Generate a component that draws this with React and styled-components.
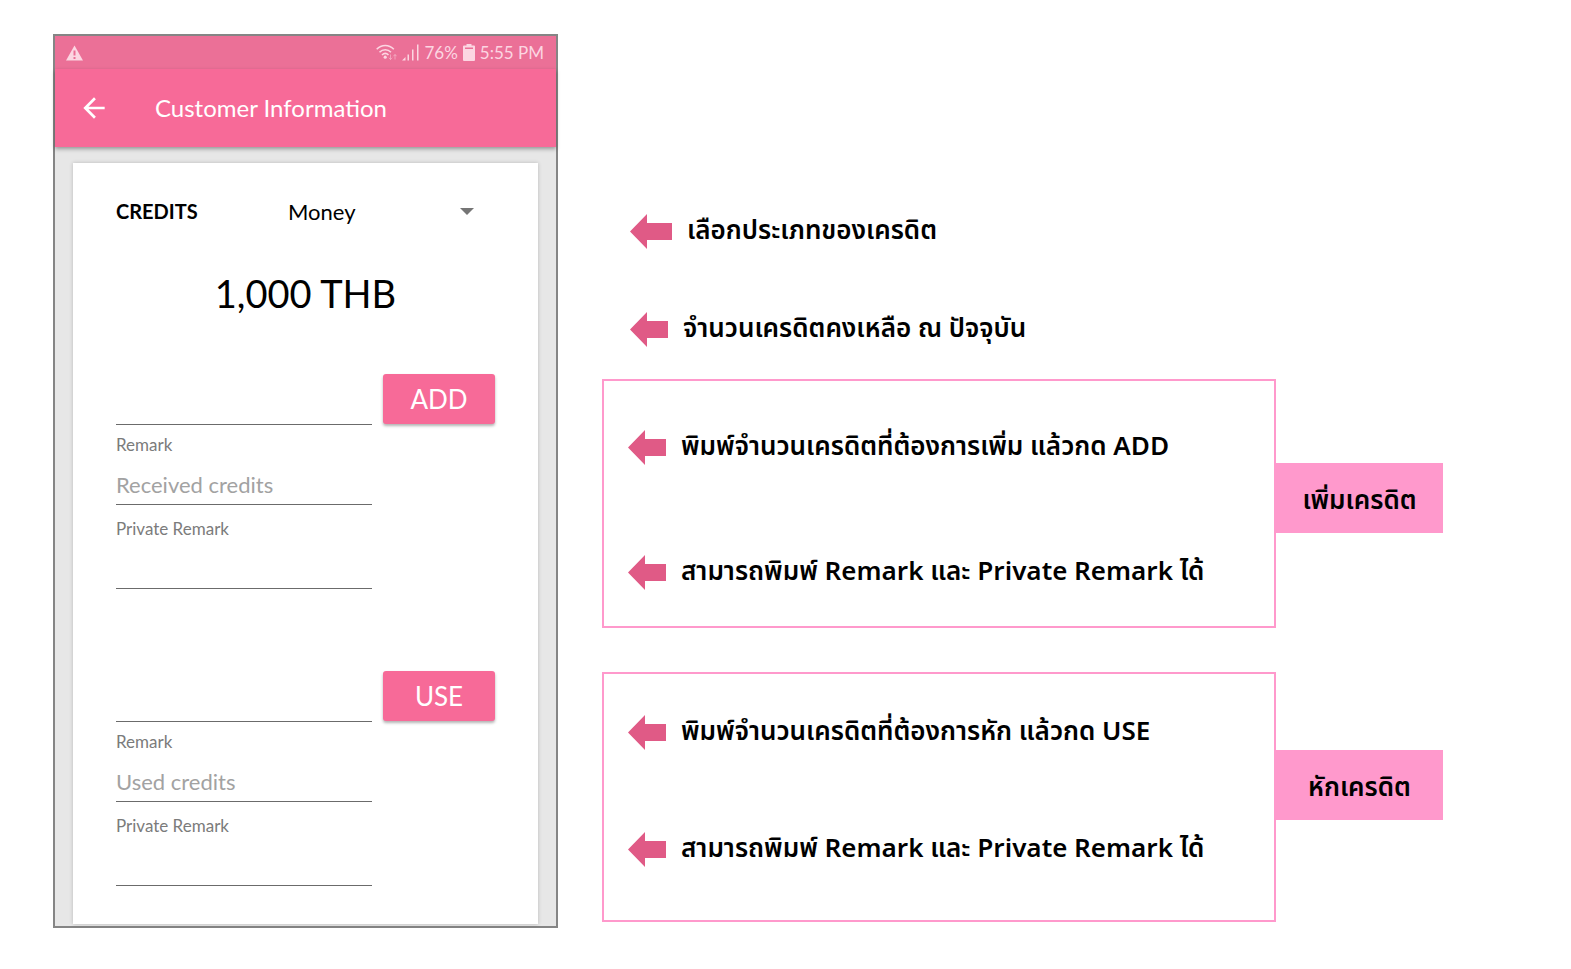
import { useState } from "react";
import styled, { createGlobalStyle } from "styled-components";
import { MdArrowBack } from "react-icons/md";

const GlobalStyle = createGlobalStyle`
  * {
    box-sizing: border-box;
  }

  body {
    margin: 0;
    background: #fff;
    color: #000;
    font-family: Lato, "Noto Sans", sans-serif;
  }
`;

const Page = styled.main`
  display: grid;
  grid-template-columns: minmax(0, 505fr) minmax(0, 841fr);
  column-gap: 44px;
  align-items: start;
  padding: 34px 128px 42px 53px;
`;

const Phone = styled.section`
  border: 2px solid #858585;
  background: #e7e7e7;
`;

const StatusBar = styled.div`
  display: flex;
  align-items: center;
  height: 33px;
  padding: 0 12px 0 11px;
  background: #eb7097;
  color: #fcd6e2;
  font-size: 17px;
  line-height: 24px;
`;

const StatusRight = styled.div`
  display: flex;
  align-items: center;
  gap: 5px;
  margin-left: auto;
`;

const AppBar = styled.header`
  display: flex;
  align-items: center;
  gap: 45px;
  height: 78px;
  padding: 0 23px;
  background: #f76a98;
  color: #fff;
  box-shadow: 0 2px 4px rgba(0, 0, 0, 0.35);

  h1 {
    margin: 0;
    font-size: 24px;
    font-weight: 400;
    line-height: 32px;
  }
`;

const BackButton = styled.button`
  display: flex;
  padding: 0;
  border: 0;
  background: none;
  color: inherit;
  cursor: pointer;
`;

const Card = styled.div`
  margin: 16px 18px 2px;
  padding: 28px 43px 38px;
  background: #fff;
  box-shadow: 0 0 4px rgba(0, 0, 0, 0.2);
`;

const CreditsRow = styled.div`
  display: flex;
  align-items: center;
  height: 40px;

  label {
    flex: 0 0 172px;
    font-size: 20px;
    font-weight: 700;
    line-height: 32px;
  }
`;

const SelectWrap = styled.div`
  display: flex;
  flex: 1;
  align-items: center;
  padding-right: 21px;

  select {
    flex: 1;
    height: 40px;
    padding: 0;
    border: 0;
    background: none;
    color: #000;
    font: inherit;
    font-size: 22px;
    appearance: none;
  }

  svg {
    pointer-events: none;
  }
`;

const Balance = styled.p`
  margin: 32px 0 51px;
  font-size: 38px;
  line-height: 60px;
  text-align: center;
`;

const CreditForm = styled.form`
  & + & {
    margin-top: 82px;
  }
`;

const AmountRow = styled.div`
  display: flex;
  align-items: flex-start;
  gap: 11px;
`;

const Input = styled.input`
  display: block;
  width: 100%;
  min-width: 0;
  height: ${({ $height }) => $height}px;
  padding: 0;
  border: 0;
  border-bottom: 1px solid #6b6b6b;
  border-radius: 0;
  outline: 0;
  background: none;
  font: inherit;
  font-size: 22px;

  &::placeholder {
    color: #a2a2a2;
    opacity: 1;
  }
`;

const Button = styled.button`
  flex: 0 0 112px;
  height: 50px;
  padding: 0;
  border: 0;
  border-radius: 3px;
  background: #f76a98;
  color: #fff;
  font: inherit;
  font-size: 26px;
  box-shadow: 0 2px 3px rgba(0, 0, 0, 0.3);
  cursor: pointer;
`;

const Remark = styled.div`
  padding-right: 123px;

  label {
    display: block;
    color: #7b7b7b;
    font-size: 17px;
    line-height: ${({ $labelHeight }) => $labelHeight}px;
  }
`;

const Notes = styled.section`
  padding-top: 173px;
  font-family: "Noto Sans Thai", "Noto Sans", sans-serif;
  font-size: 26px;
  font-weight: 600;
`;

const Note = styled.p`
  display: flex;
  align-items: center;
  gap: 15px;
  height: 48px;
  margin: 0;
  padding-left: 28px;
  white-space: nowrap;

  & + & {
    margin-top: 50px;
  }
`;

const Group = styled.div`
  display: flex;
  align-items: flex-start;
  margin-top: ${({ $top }) => $top}px;
`;

const GroupBox = styled.div`
  flex: 1;
  padding: ${({ $tight }) => ($tight ? "34px 0 47px" : "42px 0 30px")};
  border: 2px solid #ff99cc;

  ${Note} {
    padding-left: 24px;
  }

  ${Note} + ${Note} {
    margin-top: ${({ $tight }) => ($tight ? 69 : 77)}px;
  }
`;

const Tag = styled.div`
  display: flex;
  flex: 0 0 167px;
  align-items: center;
  justify-content: center;
  height: 70px;
  margin-top: ${({ $top }) => $top}px;
  padding-top: 6px;
  background: #ff99cc;
`;

const LeftArrow = ({ width = 38 }) => (
  <svg width={width} height="35" viewBox={`0 0 ${width} 35`} fill="#e05a86">
    <path d={`M0 17.5 17 0v9h${width - 17}v17H17v9z`} />
  </svg>
);

const WarningIcon = () => (
  <svg width="17" height="16" viewBox="0 0 17 16">
    <path d="M8.500 0.500 17 15.500H0z" fill="#fcd6e2" />
    <path d="M7.500 5.500h2v5h-2zM7.500 12h2v2h-2z" fill="#eb7097" />
  </svg>
);

const WifiIcon = () => (
  <svg width="21" height="17" viewBox="0 0 21 17" fill="none" stroke="#fcd6e2">
    <path d="M.7 5.200C5.500.2 13 .2 17.800 5.200M3.500 8.200c3.300-3.300 8.200-3.300 11.500 0M6 11c2-2 4.500-2 6.500 0" strokeWidth="1.600" />
    <circle cx="9.200" cy="13.200" r="1.600" fill="#fcd6e2" stroke="none" />
    <path d="M14.500 10.500v5m-1.700-1.800 1.700 1.800 1.700-1.800M19 15.500v-5m-1.700 1.800L19 10.500l1.700 1.800" opacity=".5" />
  </svg>
);

const SignalIcon = () => (
  <svg width="17" height="17" viewBox="0 0 17 17" fill="#fcd6e2">
    <path d="M0 16.500 3.500 13v3.500zM5.500 10.500H7v6H5.500zM10 5.500h1.500v11H10zM15 .5h1.500v16H15z" />
  </svg>
);

const BatteryIcon = () => (
  <svg width="12" height="17" viewBox="0 0 12 17">
    <path d="M3.500 0h5v1.500H11q1 0 1 1V16q0 1-1 1H1q-1 0-1-1V2.500q0-1 1-1h2.500z" fill="#fcd6e2" />
    <path d="M2 3.500h8V5H2z" fill="#eb7097" />
  </svg>
);

const CreditSection = ({ id, action, placeholder }) => (
  <CreditForm onSubmit={(e) => e.preventDefault()}>
    <AmountRow>
      <Input $height={51} type="text" inputMode="numeric" aria-label={`${action} amount`} />
      <Button type="submit">{action}</Button>
    </AmountRow>
    <Remark $labelHeight={40}>
      <label htmlFor={`${id}-remark`}>Remark</label>
      <Input $height={40} id={`${id}-remark`} type="text" placeholder={placeholder} />
    </Remark>
    <Remark $labelHeight={48}>
      <label htmlFor={`${id}-private`}>Private Remark</label>
      <Input $height={36} id={`${id}-private`} type="text" />
    </Remark>
  </CreditForm>
);

const App = () => {
  const [creditType, setCreditType] = useState("Money");

  return (
    <>
      <GlobalStyle />
      <Page>
        <Phone>
          <StatusBar>
            <WarningIcon />
            <StatusRight>
              <WifiIcon />
              <SignalIcon />
              <span>76%</span>
              <BatteryIcon />
              <span>5:55 PM</span>
            </StatusRight>
          </StatusBar>
          <AppBar>
            <BackButton type="button" aria-label="Back">
              <MdArrowBack size={32} />
            </BackButton>
            <h1>Customer Information</h1>
          </AppBar>
          <Card>
            <CreditsRow>
              <label htmlFor="credit-type">CREDITS</label>
              <SelectWrap>
                <select
                  id="credit-type"
                  value={creditType}
                  onChange={(e) => setCreditType(e.target.value)}
                >
                  <option>Money</option>
                </select>
                <svg width="14" height="7" viewBox="0 0 14 7" fill="#757575">
                  <path d="M0 0h14L7 7z" />
                </svg>
              </SelectWrap>
            </CreditsRow>
            <Balance>1,000 THB</Balance>
            <CreditSection id="add" action="ADD" placeholder="Received credits" />
            <CreditSection id="use" action="USE" placeholder="Used credits" />
          </Card>
        </Phone>

        <Notes>
          <Note>
            <LeftArrow width={42} />
            เลือกประเภทของเครดิต
          </Note>
          <Note>
            <LeftArrow />
            จำนวนเครดิตคงเหลือ ณ ปัจจุบัน
          </Note>
          <Group $top={26}>
            <GroupBox>
              <Note>
                <LeftArrow />
                พิมพ์จำนวนเครดิตที่ต้องการเพิ่ม แล้วกด ADD
              </Note>
              <Note>
                <LeftArrow />
                สามารถพิมพ์ Remark และ Private Remark ได้
              </Note>
            </GroupBox>
            <Tag $top={84}>เพิ่มเครดิต</Tag>
          </Group>
          <Group $top={44}>
            <GroupBox $tight>
              <Note>
                <LeftArrow />
                พิมพ์จำนวนเครดิตที่ต้องการหัก แล้วกด USE
              </Note>
              <Note>
                <LeftArrow />
                สามารถพิมพ์ Remark และ Private Remark ได้
              </Note>
            </GroupBox>
            <Tag $top={78}>หักเครดิต</Tag>
          </Group>
        </Notes>
      </Page>
    </>
  );
};

export default App;
